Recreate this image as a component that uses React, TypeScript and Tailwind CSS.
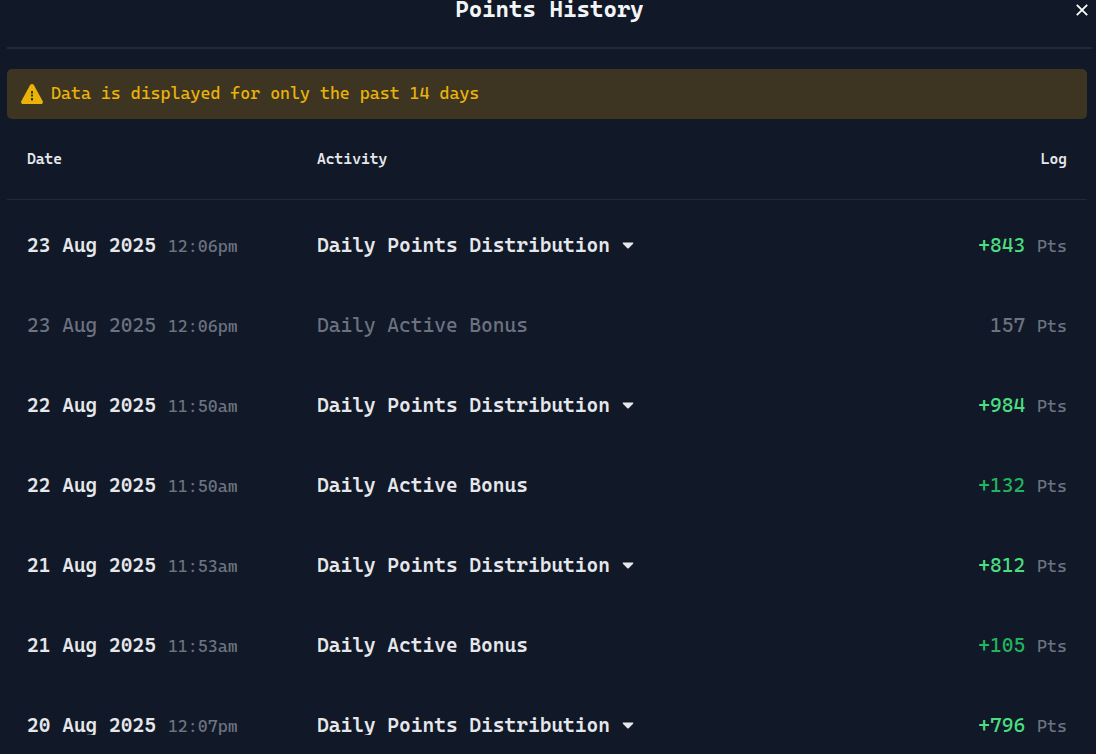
import React from "react";

type Entry = {
  date: string;
  time: string;
  activity: string;
  points: string;
  status: "total" | "bonus" | "pending";
};

const entries: Entry[] = [
  { date: "23 Aug 2025", time: "12:06pm", activity: "Daily Points Distribution", points: "+843", status: "total" },
  { date: "23 Aug 2025", time: "12:06pm", activity: "Daily Active Bonus", points: "157", status: "pending" },
  { date: "22 Aug 2025", time: "11:50am", activity: "Daily Points Distribution", points: "+984", status: "total" },
  { date: "22 Aug 2025", time: "11:50am", activity: "Daily Active Bonus", points: "+132", status: "bonus" },
  { date: "21 Aug 2025", time: "11:53am", activity: "Daily Points Distribution", points: "+812", status: "total" },
  { date: "21 Aug 2025", time: "11:53am", activity: "Daily Active Bonus", points: "+105", status: "bonus" },
  { date: "20 Aug 2025", time: "12:07pm", activity: "Daily Points Distribution", points: "+796", status: "total" },
];

const textStyles = {
  total: "font-semibold text-gray-200",
  bonus: "font-semibold text-gray-200",
  pending: "text-[#6b7280]",
};

const pointStyles = {
  total: "font-medium text-[#4ade80]",
  bonus: "text-[#22b35e]",
  pending: "text-[#6b7280]",
};

const WarningIcon = () => (
  <svg viewBox="0 0 22 20" className="w-[22px] h-5 shrink-0" aria-hidden="true">
    <path
      d="M11 0c.8 0 1.500.4 2 1.200l8.600 15.800c.8 1.500 0 3-1.600 3H2c-1.600 0-2.400-1.500-1.600-3L9 1.200C9.500.4 10.200 0 11 0z"
      fill="#eab308"
    />
    <path d="M10 7h2v2.500h-2zM10 10.500h2v2h-2zM10 14h2v2.500h-2z" fill="#3d3522" />
  </svg>
);

const Row = ({ entry }: { entry: Entry }) => (
  <tr>
    <td className="h-20 pt-3 pl-5 whitespace-nowrap">
      <span className={`text-[20px] ${textStyles[entry.status]}`}>{entry.date}</span>
      <span className="ml-3 text-[17px] text-[#6b7280]">{entry.time}</span>
    </td>
    <td className="h-20 pt-3 pl-5">
      {entry.status === "total" ? (
        <button
          type="button"
          className={`flex items-center gap-3 text-[20px] ${textStyles[entry.status]}`}
        >
          {entry.activity}
          <svg viewBox="0 0 12 7" className="w-3 h-[7px]" aria-hidden="true">
            <path d="M1.500.5h9c.7 0 1 .7.600 1.200L6.700 6.200a1 1 0 0 1-1.400 0L.9 1.700C.5 1.200.800.5 1.500.5z" fill="currentColor" />
          </svg>
        </button>
      ) : (
        <span className={`text-[20px] ${textStyles[entry.status]}`}>{entry.activity}</span>
      )}
    </td>
    <td className="h-20 pt-3 pr-5 text-right whitespace-nowrap">
      <span className={`text-[20px] ${pointStyles[entry.status]}`}>{entry.points}</span>
      <span className="ml-3 text-[17px] text-[#6b7280]">Pts</span>
    </td>
  </tr>
);

const App = () => {
  return (
    <div className="h-screen overflow-hidden flex flex-col bg-[#111827] pb-[19px] pl-[7px] pr-1 font-['Cascadia_Mono','DejaVu_Sans_Mono',monospace]">
      {/* Title bar */}
      <header className="grid grid-cols-[1fr_auto_1fr] items-start shrink-0 h-[49px] border-b-2 border-[#222938]">
        <h2 className="col-start-2 text-[23px] leading-[18px] font-extrabold text-gray-100">Points History</h2>
        <button type="button" aria-label="Close" className="justify-self-end p-1 text-white">
          <svg viewBox="0 0 12 12" className="w-3 h-3" fill="none" stroke="currentColor" strokeWidth="1.8">
            <path d="M.8.8l10.400 10.400M11.200.8L.8 11.200" />
          </svg>
        </button>
      </header>

      <div className="flex-1 min-h-0 overflow-y-auto pt-5 pr-[5px] [scrollbar-width:none]">
        <div className="flex items-center gap-2 h-[50px] px-[14px] rounded-[5px] bg-[#3d3522] text-[17px] text-[#eab308]">
          <WarningIcon />
          <p>Data is displayed for only the past 14 days</p>
        </div>

        <table className="w-full table-fixed border-collapse">
          <thead>
            <tr className="text-[15px] text-gray-200 border-b border-[#222938]">
              <th className="h-20 w-[290px] pl-5 text-left font-semibold">Date</th>
              <th className="h-20 pl-5 text-left font-semibold">Activity</th>
              <th className="h-20 w-[240px] pr-5 text-right font-semibold">Log</th>
            </tr>
          </thead>
          <tbody>
            {entries.map((entry, index) => (
              <Row key={index} entry={entry} />
            ))}
          </tbody>
        </table>
      </div>
    </div>
  );
};

export default App;
